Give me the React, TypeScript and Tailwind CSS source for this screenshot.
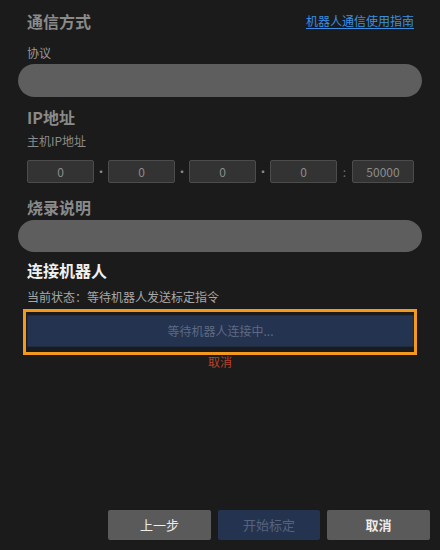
const octets = ["0", "0", "0", "0"];

export default function App() {
  return (
    <div
      className="flex h-[550px] w-[440px] flex-col bg-[#1b1b1b] px-[18px]"
      style={{ fontFamily: '"Noto Sans CJK SC", "Noto Sans", sans-serif' }}
    >
      {/* 通信方式 */}
      <div className="mt-[10px] flex h-[22px] items-center justify-between pl-[9px] pr-[8px]">
        <h2 className="text-[16px] font-bold leading-[22px] text-[#8a8a8a]">通信方式</h2>
        <a href="#" className="text-[12px] leading-[18px] text-[#3b8fe0] underline underline-offset-2">
          机器人通信使用指南
        </a>
      </div>
      <div className="mt-[12px] pl-[9px] text-[12px] leading-[18px] text-[#9a9a9a]">协议</div>
      <div className="mt-[2px] h-[33px] rounded-full bg-[#5e5e5e]" />

      {/* IP地址 */}
      <h2 className="mt-[9px] pl-[9px] text-[16px] font-bold leading-[22px] text-[#8a8a8a]">IP地址</h2>
      <div className="mt-[4px] pl-[9px] text-[12px] leading-[18px] text-[#8a8a8a]">主机IP地址</div>
      <div className="mt-[10px] flex h-[23px] items-center pl-[9px]">
        {octets.map((o, i) => (
          <div key={i} className="flex items-center">
            <div className="flex h-[23px] w-[67px] items-center justify-center rounded-[2px] border border-[#4c4c4c] bg-[#333333] text-[12px] text-[#8c8c8c]">
              {o}
            </div>
            {i < 3 ? (
              <span className="flex w-[14px] justify-center text-[12px] text-[#8c8c8c]">·</span>
            ) : (
              <span className="flex w-[15px] justify-center text-[12px] text-[#6c6c6c]">:</span>
            )}
          </div>
        ))}
        <div className="flex h-[23px] w-[62px] items-center justify-center rounded-[2px] border border-[#4c4c4c] bg-[#333333] text-[12px] text-[#8c8c8c]">
          50000
        </div>
      </div>

      {/* 烧录说明 */}
      <h2 className="mt-[13px] pl-[9px] text-[16px] font-bold leading-[22px] text-[#8a8a8a]">烧录说明</h2>
      <div className="mt-[2px] h-[32px] rounded-full bg-[#5e5e5e]" />

      {/* 连接机器人 */}
      <h2 className="mt-[7px] pl-[9px] text-[16px] font-bold leading-[22px] text-[#f0f0f0]">连接机器人</h2>
      <div className="mt-[7px] pl-[9px] text-[12px] leading-[18px] text-[#a8a8a8]">
        当前状态：等待机器人发送标定指令
      </div>
      <div className="ml-[5px] mr-[5px] mt-[3px] border-[3px] border-[#f39a1e] pb-[5px] pl-[1px] pt-[3px]">
        <div className="flex h-[32px] items-center justify-center border border-[#1f2b42] bg-[#243350] text-[12px] text-[#5d6a82]">
          等待机器人连接中...
        </div>
      </div>
      <div className="text-center text-[12px] leading-[14px] text-[#b8432c]">取消</div>

      {/* 底部按钮 */}
      <div className="-mr-[8px] mt-auto mb-[10px] flex justify-end gap-[7px]">
        <button className="h-[30px] w-[103px] rounded-[2px] bg-[#5a5a5a] text-[13px] text-[#ececec]">上一步</button>
        <button className="h-[30px] w-[102px] rounded-[2px] bg-[#243350] text-[13px] text-[#56637c]">开始标定</button>
        <button className="h-[30px] w-[103px] rounded-[2px] bg-[#5a5a5a] text-[13px] font-bold text-[#ececec]">取消</button>
      </div>
    </div>
  );
}
